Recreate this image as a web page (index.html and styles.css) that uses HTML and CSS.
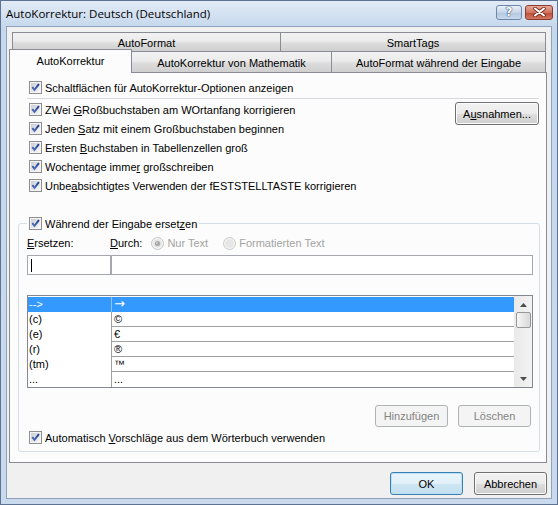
FILE: index.html
```html
<!DOCTYPE html>
<html lang="de">
<head>
    <meta charset="utf-8">
    <title>AutoKorrektur: Deutsch (Deutschland)</title>
    <link rel="stylesheet" href="styles.css">
</head>
<body>
    <svg class="sprite" width="0" height="0">
        <defs>
            <linearGradient id="cbFill" x1="0" y1="0" x2="1" y2="1">
                <stop offset="0" stop-color="#c9ced6"/>
                <stop offset="1" stop-color="#f8f8f8"/>
            </linearGradient>
            <linearGradient id="checkInk" x1="0" y1="0" x2="0" y2="1">
                <stop offset="0" stop-color="#1c3a8c"/>
                <stop offset="1" stop-color="#5472b8"/>
            </linearGradient>
            <symbol id="cb" viewBox="0 0 13 13">
                <rect x="0.5" y="0.5" width="12" height="12" fill="#f4f4f4" stroke="#8f8f8f"/>
                <rect x="2" y="2" width="9" height="9" fill="url(#cbFill)"/>
                <path d="M3.3 6.2 L5.5 8.9 L9.9 3.2" fill="none" stroke="url(#checkInk)" stroke-width="1.9"/>
            </symbol>
            <symbol id="radioOn" viewBox="0 0 13 13">
                <circle cx="6.5" cy="6.5" r="6" fill="#f3f3f3" stroke="#c4c6c8"/>
                <circle cx="6.5" cy="6.5" r="4.2" fill="#e4e4e4"/>
                <circle cx="6.5" cy="6.5" r="2.6" fill="#a9a9a9"/>
                <circle cx="5.8" cy="5.8" r="0.9" fill="#d6d6d6"/>
            </symbol>
            <symbol id="radioOff" viewBox="0 0 13 13">
                <circle cx="6.5" cy="6.5" r="6" fill="#f3f3f3" stroke="#c9cbcd"/>
                <circle cx="6.5" cy="6.5" r="4.2" fill="#e6e6e6"/>
            </symbol>
        </defs>
    </svg>

    <div class="window">
        <div class="titlebar">
            <span class="title">AutoKorrektur: Deutsch (Deutschland)</span>
            <div class="caption-btns">
                <span class="cap cap-help">?</span>
                <span class="cap cap-close">
                    <svg width="13" height="10" viewBox="0 0 13 10">
                        <path d="M2 1.5 L11 8.5 M11 1.5 L2 8.5" stroke="#7a2a20" stroke-width="3.6" stroke-linecap="round"/>
                        <path d="M2 1.5 L11 8.5 M11 1.5 L2 8.5" stroke="#fff" stroke-width="2" stroke-linecap="round"/>
                    </svg>
                </span>
            </div>
        </div>

        <div class="client">
            <div class="tabs">
                <div class="tab-row back">
                    <div class="tab tab-a">AutoFormat</div>
                    <div class="tab tab-b">SmartTags</div>
                </div>
                <div class="tab-row front">
                    <div class="tab tab-active">AutoKorrektur</div>
                    <div class="tab tab-c">AutoKorrektur von Mathematik</div>
                    <div class="tab tab-d">AutoFormat während der Eingabe</div>
                </div>
            </div>

            <div class="panel">
                <div class="opts">
                    <div class="check"><svg class="box"><use href="#cb"/></svg><span>Schaltflächen für AutoKorrektur-Optionen anzeigen</span></div>
                    <div class="sep"></div>
                    <div class="opts-grid">
                        <div class="opts-list">
                            <div class="check"><svg class="box"><use href="#cb"/></svg><span>ZWei <u>G</u>Roßbuchstaben am WOrtanfang korrigieren</span></div>
                            <div class="check"><svg class="box"><use href="#cb"/></svg><span>Jeden <u>S</u>atz mit einem Großbuchstaben beginnen</span></div>
                            <div class="check"><svg class="box"><use href="#cb"/></svg><span>Ersten <u>B</u>uchstaben in Tabellenzellen groß</span></div>
                            <div class="check"><svg class="box"><use href="#cb"/></svg><span>Wochentage imme<u>r</u> großschreiben</span></div>
                            <div class="check"><svg class="box"><use href="#cb"/></svg><span>Unbe<u>a</u>bsichtigtes Verwenden der fESTSTELLTASTE korrigieren</span></div>
                        </div>
                        <div class="btn btn-except"><span>A<u>u</u>snahmen...</span></div>
                    </div>
                </div>

                <div class="group">
                    <div class="group-title check"><svg class="box"><use href="#cb"/></svg><span>Während der Eingabe erset<u>z</u>en</span></div>

                    <div class="labels">
                        <span class="lbl-first"><u>E</u>rsetzen:</span>
                        <span><u>D</u>urch:</span>
                        <span class="radio radio-first"><svg class="box"><use href="#radioOn"/></svg><span>Nur Text</span></span>
                        <span class="radio"><svg class="box"><use href="#radioOff"/></svg><span>Formatierten Text</span></span>
                    </div>

                    <div class="fields">
                        <div class="field field-a"><span class="caret"></span></div>
                        <div class="field field-b"></div>
                    </div>

                    <div class="list">
                        <div class="rows">
                            <div class="row selected"><span class="c1">--&gt;</span><span class="c2"><span class="sym">→</span></span></div>
                            <div class="row"><span class="c1">(c)</span><span class="c2">©</span></div>
                            <div class="row"><span class="c1">(e)</span><span class="c2">€</span></div>
                            <div class="row"><span class="c1">(r)</span><span class="c2">®</span></div>
                            <div class="row"><span class="c1">(tm)</span><span class="c2">™</span></div>
                            <div class="row"><span class="c1">...</span><span class="c2">...</span></div>
                        </div>
                        <div class="scroll">
                            <svg class="arrow" width="7" height="4" viewBox="0 0 7 4"><path d="M0 4 L3.5 0 L7 4 Z" fill="#4d4d4d"/></svg>
                            <div class="thumb"></div>
                            <svg class="arrow arrow-down" width="7" height="4" viewBox="0 0 7 4"><path d="M0 0 L3.5 4 L7 0 Z" fill="#4d4d4d"/></svg>
                        </div>
                    </div>

                    <div class="list-btns">
                        <div class="btn btn-disabled">Hinzufügen</div>
                        <div class="btn btn-disabled">Löschen</div>
                    </div>

                    <div class="check"><svg class="box"><use href="#cb"/></svg><span>Automatisch <u>V</u>orschläge aus dem Wörterbuch verwenden</span></div>
                </div>
            </div>

            <div class="footer">
                <div class="btn btn-default">OK</div>
                <div class="btn">Abbrechen</div>
            </div>
        </div>
    </div>
</body>
</html>
```

FILE: styles.css
```css
body {
    margin: 0;
    font-family: "Liberation Sans", Arial, sans-serif;
    font-size: 11px;
    color: #000;
}
.sprite {
    display: block;
    width: 0;
    height: 0;
    overflow: hidden;
}
.window {
    width: 558px;
    height: 505px;
    box-sizing: border-box;
    border: 1px solid #5d7391;
    background: linear-gradient(#e2ebf6, #c6d8ed 26px, #c9daee);
    display: flex;
    flex-direction: column;
}
.titlebar {
    height: 25px;
    display: flex;
    align-items: center;
    padding: 0 4px 0 5px;
}
.title {
    font-family: "Open Sans", "Liberation Sans", sans-serif;
    font-size: 11.5px;
    color: #000;
}
.caption-btns {
    margin-left: auto;
    display: flex;
    gap: 3px;
    margin-top: -3px;
}
.cap {
    width: 26px;
    height: 15px;
    box-sizing: border-box;
    border: 1px solid #6d87aa;
    border-radius: 3px;
    display: flex;
    align-items: center;
    justify-content: center;
}
.cap-help {
    background: linear-gradient(#e9f0f8, #c5d5e8 50%, #b3c7df 51%, #c9d9ec);
    color: #fff;
    font-family: "DejaVu Sans", sans-serif;
    font-weight: bold;
    font-size: 12px;
    text-shadow: 0 0 1px #2f4d74, 0 0 1px #2f4d74, 0 0 1px #2f4d74;
}
.cap-close {
    width: 28px;
    border-color: #8a3a30;
    background: linear-gradient(#e7a99c, #d0735f 50%, #bc4b35 51%, #d27a62);
}
.client {
    flex: 1;
    margin: 0 5px 5px;
    border: 1px solid #8fa3bd;
    background: #f0f0f0;
    padding: 5px 4px 0 2px;
    display: flex;
    flex-direction: column;
}
.tab-row {
    display: flex;
    align-items: flex-end;
}
.tab-row.back {
    height: 19px;
    margin-left: 3px;
}
.tab-row.front {
    height: 21px;
}
.tab {
    box-sizing: border-box;
    border: 1px solid #898c95;
    border-bottom: none;
    background: linear-gradient(#f2f2f2, #ebebeb 45%, #dddddd 55%, #cfcfcf);
    display: flex;
    align-items: center;
    justify-content: center;
    padding-top: 1px;
}
.back .tab {
    height: 19px;
}
.front .tab {
    height: 21px;
}
.tab-a { width: 269px; }
.tab-b { width: 266px; margin-left: -1px; }
.tab-c { width: 201px; margin-left: -1px; }
.tab-d { width: 215px; margin-left: -1px; }
.front .tab-active {
    width: 123px;
    height: 24px;
    margin-top: -2px;
    margin-bottom: -1px;
    background: #fcfcfc;
    position: relative;
    z-index: 1;
    padding-top: 0;
    padding-bottom: 2px;
}
.panel {
    border: 1px solid #898c95;
    background: #fcfcfc;
    padding: 5px 6px 10px 8px;
}
.opts {
    margin: 0 1px 0 9px;
}
.check {
    height: 19px;
    display: flex;
    align-items: center;
    padding-left: 2px;
    white-space: nowrap;
}
.box {
    width: 13px;
    height: 13px;
    flex: none;
    margin-right: 3px;
}
.sep {
    height: 1px;
    background: #d5d9de;
    margin: 1px 0;
}
.opts-grid {
    display: flex;
    align-items: flex-start;
}
.opts-list {
    flex: 1;
}
.btn {
    box-sizing: border-box;
    height: 23px;
    width: 73px;
    border: 1px solid #707070;
    border-radius: 3px;
    background: linear-gradient(#f2f2f2, #ebebeb 50%, #dddddd 51%, #cfcfcf);
    box-shadow: inset 0 0 0 1px #fbfbfb;
    display: flex;
    align-items: center;
    justify-content: center;
}
.btn-except {
    width: 84px;
    margin-top: 2px;
}
.btn-disabled {
    height: 22px;
    border-color: #adb2b5;
    background: #f4f4f4;
    box-shadow: none;
    color: #838383;
}
.btn-default {
    border-color: #3c7fb1;
    box-shadow: inset 0 0 0 1px #b9e1f6;
    background: linear-gradient(#eaf5fb, #e0eff8 50%, #cfe6f3 51%, #c2dff0);
}
.group {
    margin-top: 28px;
    border: 1px solid #d5dfe5;
    border-radius: 3px;
    padding: 0 6px 4px 8px;
}
.group-title {
    width: fit-content;
    height: 15px;
    margin: -8px 0 0 0;
    padding: 0 2px 0 2px;
    background: #fcfcfc;
}
.labels {
    height: 16px;
    margin-top: 4px;
    display: flex;
    align-items: center;
}
.lbl-first {
    width: 83px;
}
.radio {
    display: flex;
    align-items: center;
    color: #a3a3a3;
    margin-left: 15px;
}
.radio-first {
    margin-left: 9px;
}
.fields {
    margin-top: 4px;
    display: flex;
}
.field {
    height: 20px;
    box-sizing: border-box;
    border: 1px solid #a5a9ad;
    background: #fff;
    display: flex;
    align-items: center;
}
.field-a {
    width: 84px;
}
.field-b {
    flex: 1;
}
.caret {
    width: 1px;
    height: 13px;
    margin-left: 3px;
    background: #000;
}
.list {
    margin-top: 20px;
    border: 1px solid #828790;
    background: #fff;
    display: flex;
}
.rows {
    flex: 1;
    padding-top: 1px;
}
.row {
    height: 15px;
    display: flex;
}
.c1 {
    width: 82px;
    padding-left: 1px;
    border-right: 1px solid #a0a0a0;
    line-height: 15px;
}
.c2 {
    flex: 1;
    padding-left: 2px;
    border-bottom: 1px solid #a0a0a0;
    line-height: 14px;
}
.sym {
    font-family: "DejaVu Sans", sans-serif;
    font-size: 13px;
}
.row:last-child .c2 {
    border-bottom: none;
}
.selected {
    background: #3399ff;
    color: #fff;
}
.selected .c1 {
    border-right-color: #8cc4ff;
}
.selected .c2 {
    border-bottom-color: #3399ff;
}
.scroll {
    width: 18px;
    background: linear-gradient(90deg, #e9e9e9, #f3f3f3);
    display: flex;
    flex-direction: column;
    align-items: center;
}
.arrow {
    margin-top: 7px;
}
.thumb {
    width: 15px;
    height: 16px;
    box-sizing: border-box;
    margin-top: 5px;
    border: 1px solid #979797;
    border-radius: 2px;
    background: linear-gradient(90deg, #f5f5f5, #d9d9d9);
}
.arrow-down {
    margin-top: auto;
    margin-bottom: 6px;
}
.list-btns {
    margin-top: 17px;
    display: flex;
    justify-content: flex-end;
    gap: 10px;
    padding-right: 2px;
}
.list-btns + .check {
    margin-top: 1px;
}
.footer {
    margin-top: 9px;
    display: flex;
    justify-content: flex-end;
    gap: 11px;
}
```
